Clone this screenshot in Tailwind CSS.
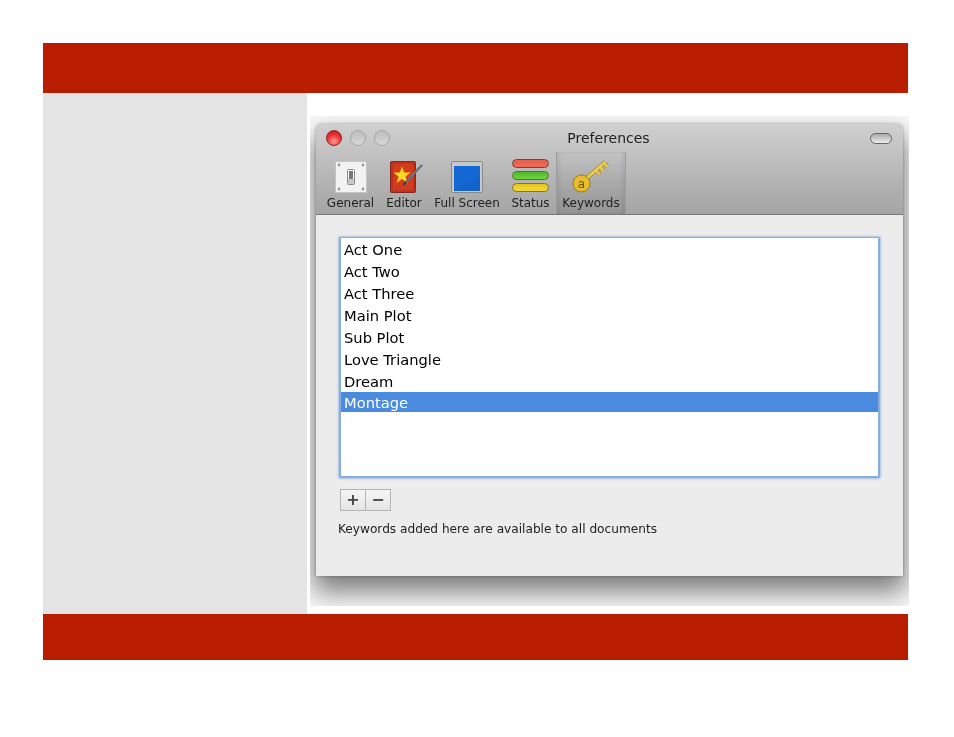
<!DOCTYPE html>
<html lang="en">
<head>
    <meta charset="UTF-8">
    <title>Preferences</title>
    <script src="https://cdn.jsdelivr.net/npm/@tailwindcss/browser@4"></script>
</head>
<body class="bg-white font-['DejaVu_Sans',sans-serif] text-black">
<div class="w-[865px] ml-[43px] pt-[43px]">
    <!-- top bar -->
    <div class="h-[50px] bg-[#b91d00]"></div>

    <div class="flex h-[521px]">
        <div class="w-[264px] shrink-0 bg-[#e4e4e4]"></div>

        <!-- screenshot of the window, its shadow gets clipped by the frame -->
        <div class="ml-[3px] mt-[23px] w-[599px] h-[490px] shrink-0 overflow-hidden bg-[#f8f8f8] pl-[6px] pt-[8px]">
            <div class="w-[587px] h-[452px] rounded-t-[5px] bg-[#ececec] shadow-[0_14px_26px_2px_rgba(0,0,0,0.5),0_0_3px_rgba(0,0,0,0.35)] flex flex-col blur-[0.35px]">

                <!-- title + toolbar -->
                <div class="h-[91px] shrink-0 rounded-t-[5px] border-b border-[#777777] bg-gradient-to-b from-[#d0d0d0] to-[#a4a4a4]">
                    <div class="relative h-[28px] flex items-center justify-center text-[14px] text-[#222222]">
                        <div class="absolute left-[10px] top-[6px] flex gap-[8px]">
                            <span class="size-[16px] rounded-full border border-[#a02020] bg-[radial-gradient(circle_at_50%_75%,#ff9a9a,#e83030_55%,#b01c1c)]"></span>
                            <span class="size-[16px] rounded-full border border-[#a8a8a8] bg-gradient-to-b from-[#bcbcbc] to-[#d8d8d8]"></span>
                            <span class="size-[16px] rounded-full border border-[#a8a8a8] bg-gradient-to-b from-[#bcbcbc] to-[#d8d8d8]"></span>
                        </div>
                        <span class="-ml-[2px]">Preferences</span>
                        <span class="absolute left-[554px] top-[9px] w-[22px] h-[11px] rounded-full border border-[#666666] bg-gradient-to-b from-[#aaaaaa] to-[#eeeeee]"></span>
                    </div>

                    <div class="flex h-[62px] pl-[11px] text-[12px] leading-[14px] text-[#222222]">
                        <div class="w-[47px] flex flex-col items-center">
                            <svg class="mt-[8px]" width="34" height="34" viewBox="0 0 34 34">
                                <rect x="1.5" y="1.5" width="31" height="31" fill="#f2f2f2" stroke="#c4c4c4"/>
                                <circle cx="5" cy="5" r="1.4" fill="#999"/><circle cx="29" cy="5" r="1.4" fill="#999"/>
                                <circle cx="5" cy="29" r="1.4" fill="#999"/><circle cx="29" cy="29" r="1.4" fill="#999"/>
                                <rect x="13.5" y="9.5" width="7" height="15" rx="1" fill="#fff" stroke="#888"/>
                                <rect x="15" y="11" width="4" height="8" fill="#777"/>
                                <rect x="14" y="19" width="6" height="5" fill="#c8c8c8"/>
                            </svg>
                            <span class="mt-[2px] whitespace-nowrap">General</span>
                        </div>
                        <div class="ml-[12px] w-[36px] flex flex-col items-center">
                            <svg class="mt-[8px] overflow-visible" width="34" height="34" viewBox="0 0 34 34">
                                <rect x="3.5" y="1.5" width="25" height="31" rx="1" fill="#c0301a" stroke="#7d2a20"/>
                                <rect x="6" y="4" width="20" height="26" fill="#d23c1c"/>
                                <polygon points="15,6.5 17.2,12.5 23.5,12.5 18.5,16.5 20.5,23 15,19 9.5,23 11.5,16.5 6.5,12.5 12.8,12.5" fill="#ffd81f"/>
                                <path d="M35 5 L19 22" stroke="#66727e" stroke-width="2.4"/>
                                <path d="M19 22 L16 25" stroke="#38404a" stroke-width="2"/>
                            </svg>
                            <span class="mt-[2px] whitespace-nowrap">Editor</span>
                        </div>
                        <div class="ml-[12px] w-[66px] flex flex-col items-center">
                            <svg class="mt-[8px]" width="34" height="34" viewBox="0 0 34 34">
                                <rect x="1.5" y="1.5" width="31" height="31" rx="1" fill="#c8c8c8" stroke="#8a8a8a"/>
                                <rect x="4" y="6" width="26" height="25" fill="#1468d4"/>
                                <path d="M4 31 L30 16 V31 Z" fill="#1162ca"/>
                            </svg>
                            <span class="mt-[2px] whitespace-nowrap">Full Screen</span>
                        </div>
                        <div class="ml-[12px] w-[37px] flex flex-col items-center">
                            <div class="mt-[7px] h-[34px] flex flex-col gap-[3px]">
                                <span class="block w-[37px] h-[9px] rounded-full border border-[#8d3a30] bg-gradient-to-b from-[#e2604f] to-[#f26a58]"></span>
                                <span class="block w-[37px] h-[9px] rounded-full border border-[#4a7a20] bg-gradient-to-b from-[#4fb826] to-[#72d23e]"></span>
                                <span class="block w-[37px] h-[9px] rounded-full border border-[#8a7a18] bg-gradient-to-b from-[#e6c416] to-[#f4dc3c]"></span>
                            </div>
                            <span class="mt-[3px] whitespace-nowrap">Status</span>
                        </div>
                        <!-- selected tab -->
                        <div class="ml-[7px] w-[70px] h-[62px] flex flex-col items-center border-x border-[#9c9c9c] bg-gradient-to-b from-transparent to-black/10 shadow-[inset_3px_0_3px_rgba(0,0,0,0.06),inset_-3px_0_3px_rgba(0,0,0,0.06)]">
                            <svg class="mt-[7px] overflow-visible" width="44" height="34" viewBox="0 0 44 34">
                                <path d="M17 20 L36 3 M27 11.5 L30.5 15.5 M31 8 L34.5 12 M35 4 L38.5 8" stroke="#a88a20" stroke-width="4" fill="none"/>
                                <path d="M17 20 L36 3 M27 11.5 L30.5 15.5 M31 8 L34.5 12 M35 4 L38.5 8" stroke="#ecce58" stroke-width="2.4" fill="none"/>
                                <circle cx="12.5" cy="24.5" r="8.5" fill="#e6bd2c" stroke="#9a7a18"/>
                                <text x="12.5" y="28.5" font-size="12" text-anchor="middle" fill="#6d5510">a</text>
                            </svg>
                            <span class="mt-[3px] whitespace-nowrap">Keywords</span>
                        </div>
                    </div>
                </div>

                <!-- keyword list -->
                <div class="pl-[23px] pt-[22px]">
                    <div class="w-[541px] h-[241px] rounded-[2px] border-x-2 border-b-2 border-t border-[#86aede] shadow-[0_0_2px_1px_rgba(120,165,225,0.6)] bg-white text-[14.7px] leading-[24px] flex flex-col gap-[2px]">
                        <div class="h-[20px] pl-[3px]">Act One</div>
                        <div class="h-[20px] pl-[3px]">Act Two</div>
                        <div class="h-[20px] pl-[3px]">Act Three</div>
                        <div class="h-[20px] pl-[3px]">Main Plot</div>
                        <div class="h-[20px] pl-[3px]">Sub Plot</div>
                        <div class="h-[20px] pl-[3px]">Love Triangle</div>
                        <div class="h-[20px] pl-[3px]">Dream</div>
                        <div class="h-[20px] pl-[3px] leading-[22px] bg-[#4a8be0] text-white">Montage</div>
                    </div>

                    <div class="mt-[11px] ml-[1px] w-[51px] h-[22px] flex border border-[#b4b4b4] bg-gradient-to-b from-[#f6f6f6] to-[#e4e4e4] text-[#444444] text-[16px] leading-[20px] font-bold text-center">
                        <span class="w-[25px] border-r border-[#b4b4b4]">+</span>
                        <span class="flex-1">−</span>
                    </div>

                    <p class="mt-[10px] -ml-px text-[12.15px] leading-[16px] text-[#222222]">Keywords added here are available to all documents</p>
                </div>
            </div>
        </div>
    </div>

    <!-- bottom bar -->
    <div class="h-[46px] bg-[#b91d00]"></div>
</div>
</body>
</html>
